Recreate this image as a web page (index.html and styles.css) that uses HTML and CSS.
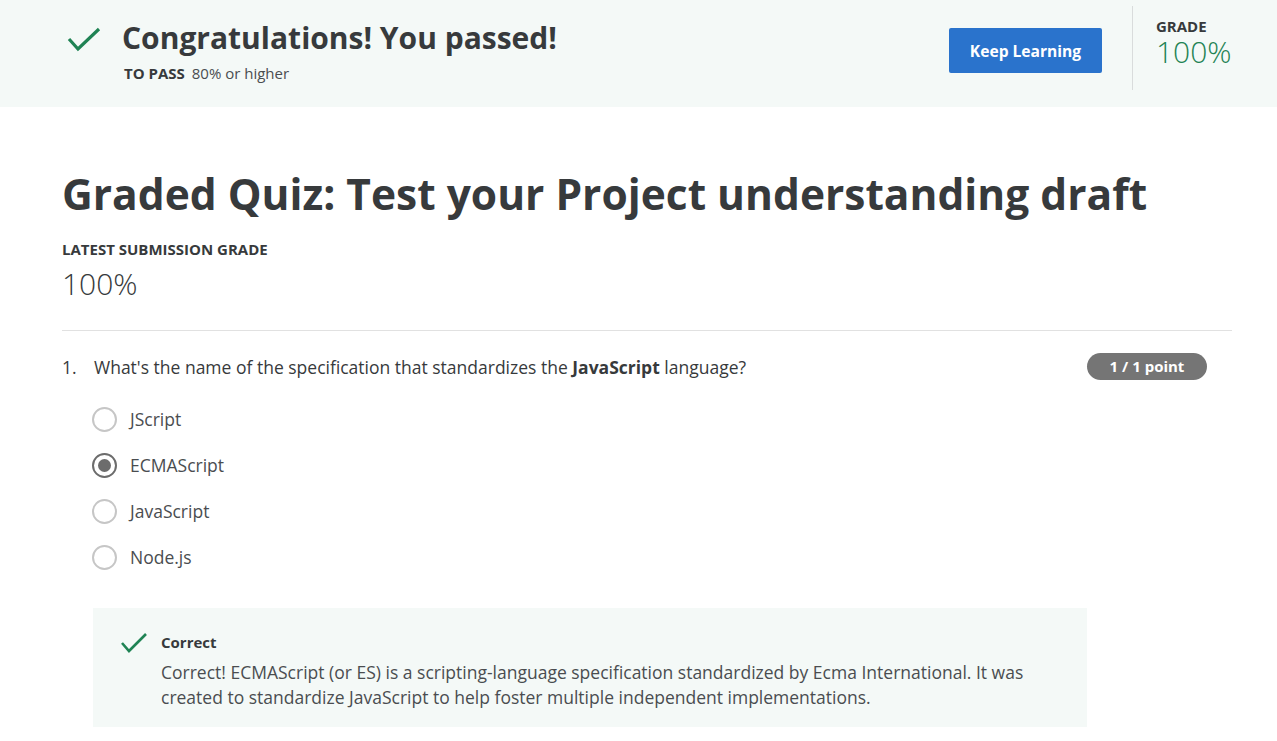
FILE: index.html
```html
<!DOCTYPE html>
<html>
<head>
<meta charset="utf-8">
<link rel="stylesheet" href="styles.css">
</head>
<body>
<header class="banner">
  <div class="banner-main">
    <svg class="banner-check" width="34" height="26" viewBox="0 0 34 26"><path d="M2 12 L11 22 L32 2" fill="none" stroke="#1f8354" stroke-width="3.2"/></svg>
    <div class="banner-text">
      <h2 class="banner-title">Congratulations! You passed!</h2>
      <div class="banner-sub"><span class="label">TO PASS</span> 80% or higher</div>
    </div>
  </div>
  <button class="btn-primary">Keep Learning</button>
  <div class="banner-grade">
    <div class="label grade-label">GRADE</div>
    <div class="grade-value">100%</div>
  </div>
</header>
<main class="content">
  <h1 class="quiz-title">Graded Quiz: Test your Project understanding draft</h1>
  <div class="label">LATEST SUBMISSION GRADE</div>
  <div class="latest-grade">100%</div>
  <hr class="divider">
  <section class="question">
    <div class="question-head">
      <span class="q-num">1.</span>
      <span class="q-text">What's the name of the specification that standardizes the <strong>JavaScript</strong> language?</span>
      <span class="points">1 / 1 point</span>
    </div>
    <ul class="options">
      <li class="option"><span class="radio"></span>JScript</li>
      <li class="option"><span class="radio checked"></span>ECMAScript</li>
      <li class="option"><span class="radio"></span>JavaScript</li>
      <li class="option"><span class="radio"></span>Node.js</li>
    </ul>
    <div class="feedback">
      <svg class="fb-check" width="28" height="22" viewBox="0 0 28 22"><path d="M2 11 L9 19 L26 2" fill="none" stroke="#1f8354" stroke-width="2.6"/></svg>
      <div class="fb-body">
        <div class="fb-title">Correct</div>
        <p class="fb-text">Correct! ECMAScript (or ES) is a scripting-language specification standardized by Ecma International. It was created to standardize JavaScript to help foster multiple independent implementations.</p>
      </div>
    </div>
  </section>
</main>
</body>
</html>
```
FILE: styles.css
```css
* { box-sizing: border-box; }
html, body { margin: 0; padding: 0; background: #fff; }
body {
  font-family: "Open Sans", "Noto Sans", sans-serif;
  color: #373a3c;
  overflow: hidden;
}
.label {
  font-size: 15px;
  font-weight: 700;
  line-height: 20px;
  color: #373a3c;
}
.banner {
  height: 107px;
  background: #f4f9f7;
  display: flex;
  align-items: flex-start;
  padding-left: 67px;
}
.banner-main {
  display: flex;
  align-items: flex-start;
  flex: 1;
  padding-top: 26px;
}
.banner-check { margin-top: 1px; margin-right: 21px; }
.banner-title {
  margin: 0;
  font-size: 30px;
  font-weight: 700;
  line-height: 24px;
  color: #373a3c;
}
.banner-sub {
  margin-top: 13px;
  margin-left: 2px;
  font-size: 15px;
  line-height: 20px;
  color: #4a4d50;
}
.banner-sub .label { margin-right: 3px; }
.btn-primary {
  margin-top: 28px;
  width: 153px;
  height: 45px;
  border: 0;
  border-radius: 2px;
  background: #2a73cc;
  color: #fff;
  font-family: inherit;
  font-size: 15.6px;
  font-weight: 700;
  padding: 0;
}
.banner-grade {
  margin-top: 6px;
  margin-left: 30px;
  height: 84px;
  width: 145px;
  border-left: 1px solid #d9dcdc;
  padding-left: 23px;
  padding-top: 11px;
}
.grade-label { line-height: 18px; }
.grade-value {
  font-size: 30px;
  font-weight: 300;
  line-height: 34px;
  color: #1f8354;
}
.content {
  padding: 0 45px 0 62px;
}
.quiz-title {
  margin: 62px 0 0;
  font-size: 42.5px;
  font-weight: 700;
  line-height: 50px;
  color: #373a3c;
}
.content > .label { margin-top: 20px; }
.latest-grade {
  margin-top: 8px;
  font-size: 30px;
  font-weight: 300;
  line-height: 34px;
  color: #373a3c;
}
.divider {
  margin: 29px 0 0;
  border: 0;
  border-top: 1px solid #e1e1e1;
}
.question { padding-top: 22px; }
.question-head {
  display: flex;
  align-items: center;
  font-size: 17.5px;
  line-height: 24px;
  padding-right: 25px;
}
.q-num { width: 32px; }
.q-text { flex: 1; }
.q-text strong { font-weight: 700; }
.points {
  background: #757575;
  color: #fff;
  font-size: 15px;
  font-weight: 700;
  line-height: 27px;
  height: 27px;
  border-radius: 14px;
  width: 120px;
  text-align: center;
}
.options {
  list-style: none;
  margin: 16px 0 0;
  padding: 0 0 0 30px;
}
.option {
  display: flex;
  align-items: center;
  height: 46px;
  font-size: 17.5px;
  color: #4a4d50;
}
.radio {
  width: 25px;
  height: 25px;
  border: 2px solid #c6c6c6;
  border-radius: 50%;
  margin-right: 13px;
  display: flex;
  align-items: center;
  justify-content: center;
}
.radio.checked { border-color: #6c6c6c; }
.radio.checked::after {
  content: "";
  width: 13px;
  height: 13px;
  border-radius: 50%;
  background: #6c6c6c;
}
.feedback {
  margin: 28px 0 0 31px;
  width: 994px;
  background: #f4f9f7;
  display: flex;
  align-items: flex-start;
  padding: 24px 20px 17px 27px;
}
.fb-check { margin-top: 0; margin-right: 13px; flex: none; }
.fb-title {
  font-size: 15px;
  font-weight: 700;
  line-height: 20px;
}
.fb-text {
  margin: 8px 0 0;
  font-size: 17.5px;
  line-height: 25px;
  color: #4a4d50;
}
```
